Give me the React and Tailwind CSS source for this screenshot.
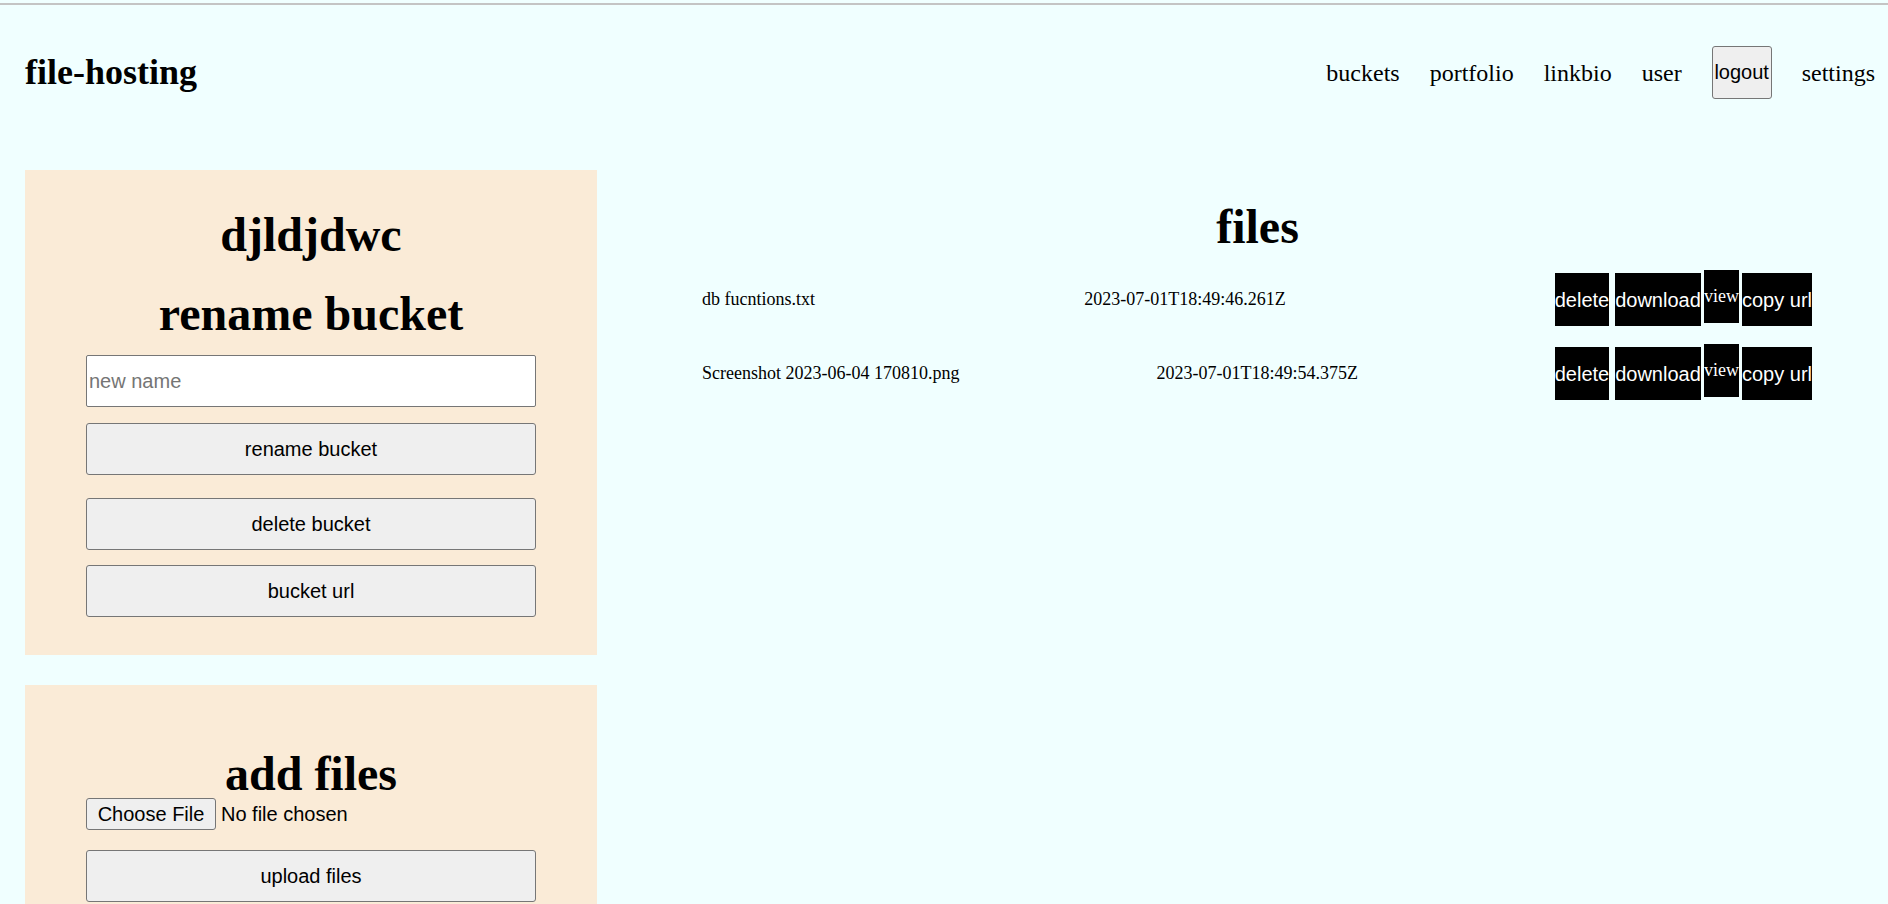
import React from 'react';

const navLinks = ['buckets', 'portfolio', 'linkbio', 'user'];

const files = [
  { name: 'db fucntions.txt', date: '2023-07-01T18:49:46.261Z' },
  { name: 'Screenshot 2023-06-04 170810.png', date: '2023-07-01T18:49:54.375Z' },
];

// grey native-looking button used in the side panels
const panelBtn =
  "mx-auto flex h-[52px] w-[450px] items-center justify-center rounded-[3px] border border-[#767676] bg-[#efefef] font-['Liberation_Sans',Arial,sans-serif] text-[20px] text-black";

const fileBtn =
  "flex h-[53px] items-center justify-center whitespace-nowrap bg-black text-white";

const App = () => {
  return (
    <div className="min-h-screen bg-[#f0ffff] font-['Liberation_Serif','Times_New_Roman',serif] text-black">
      <div className="h-[3px]"></div>
      <div className="h-[2px] bg-[#c4c4c4]"></div>

      <header className="flex h-[135px] items-center justify-between pl-[25px] pr-[13px]">
        <h1 className="text-[36px] font-bold leading-[41px]">file-hosting</h1>
        <nav className="flex items-center gap-[30px] text-[24px] leading-[28px]">
          {navLinks.map((link) => (
            <a key={link} href="#" className="text-black">
              {link}
            </a>
          ))}
          <button className="flex h-[53px] w-[60px] items-center justify-center rounded-[3px] border border-[#767676] bg-[#efefef] font-['Liberation_Sans',Arial,sans-serif] text-[20px] leading-[23px]">
            logout
          </button>
          <a href="#" className="text-black">settings</a>
        </nav>
      </header>

      <main className="mt-[30px] flex items-start pl-[25px]">
        <aside className="flex w-[572px] shrink-0 flex-col gap-[30px]">
          <section className="bg-[#faebd7] pb-[38px] pt-[37px]">
            <h2 className="text-center text-[48px] font-bold leading-[55px]">djldjdwc</h2>
            <h2 className="mt-[24px] text-center text-[48px] font-bold leading-[55px]">rename bucket</h2>
            <input
              type="text"
              placeholder="new name"
              className="mx-auto mt-[14px] block h-[52px] w-[450px] rounded-[2px] border border-[#767676] bg-white pl-[2px] font-['Liberation_Sans',Arial,sans-serif] text-[20px] placeholder:text-[#757575] focus:outline-none"
            />
            <button className={`${panelBtn} mt-[16px]`}>rename bucket</button>
            <button className={`${panelBtn} mt-[23px]`}>delete bucket</button>
            <button className={`${panelBtn} mt-[15px]`}>bucket url</button>
          </section>

          <section className="bg-[#faebd7] pb-[40px] pt-[61px]">
            <h2 className="text-center text-[48px] font-bold leading-[55px]">add files</h2>
            <div className="mx-auto -mt-[3px] flex w-[450px] items-center font-['Liberation_Sans',Arial,sans-serif] text-[20px] leading-[23px]">
              <button className="flex h-[32px] w-[130px] items-center justify-center rounded-[3px] border border-[#767676] bg-[#efefef]">
                Choose File
              </button>
              <span className="ml-[5px]">No file chosen</span>
            </div>
            <button className={`${panelBtn} mt-[20px]`}>upload files</button>
          </section>
        </aside>

        <section className="ml-[30px] flex-1 pt-[29px]">
          <h2 className="text-center text-[48px] font-bold leading-[55px]">files</h2>
          <div className="mt-[16px] flex flex-col gap-[18px] pl-[75px] pr-[76px] text-[18px]">
            {files.map((file) => (
              <div key={file.name} className="flex items-center justify-between">
                <span className="mt-[2px]">{file.name}</span>
                <span className="mt-[2px]">{file.date}</span>
                <div className="flex items-start">
                  <button className={`${fileBtn} mt-[3px] w-[54px] font-['Liberation_Sans',Arial,sans-serif] text-[20px]`}>
                    delete
                  </button>
                  <button className={`${fileBtn} ml-[6px] mt-[3px] w-[86px] font-['Liberation_Sans',Arial,sans-serif] text-[20px]`}>
                    download
                  </button>
                  <button className={`${fileBtn} ml-[3px] w-[35px] text-[18px]`}>view</button>
                  <button className={`${fileBtn} ml-[3px] mt-[3px] w-[70px] font-['Liberation_Sans',Arial,sans-serif] text-[20px]`}>
                    copy url
                  </button>
                </div>
              </div>
            ))}
          </div>
        </section>
      </main>
    </div>
  );
};

export default App;
